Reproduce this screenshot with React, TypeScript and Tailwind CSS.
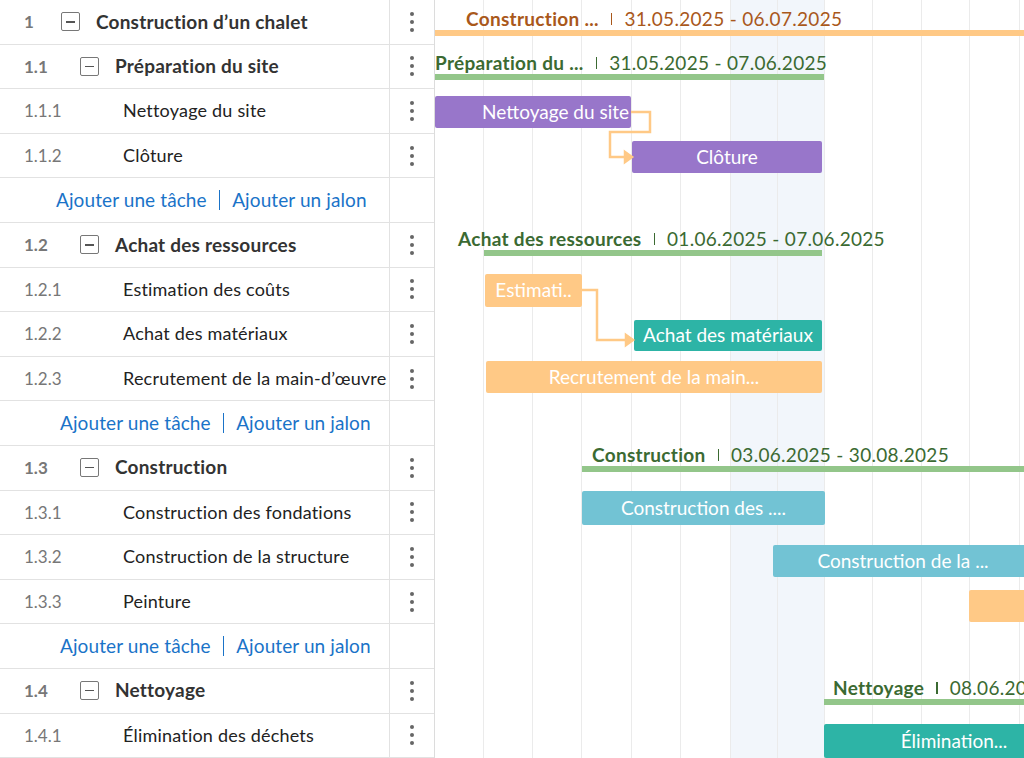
const F = { fontFamily: '"Lato","Noto Sans",sans-serif' };

type Row =
  | { kind: "task"; num: string; name: string; level: 0 | 1 | 2 }
  | { kind: "add"; pad: string };

const rows: Row[] = [
  { kind: "task", num: "1", name: "Construction d’un chalet", level: 0 },
  { kind: "task", num: "1.1", name: "Préparation du site", level: 1 },
  { kind: "task", num: "1.1.1", name: "Nettoyage du site", level: 2 },
  { kind: "task", num: "1.1.2", name: "Clôture", level: 2 },
  { kind: "add", pad: "pl-[56px]" },
  { kind: "task", num: "1.2", name: "Achat des ressources", level: 1 },
  { kind: "task", num: "1.2.1", name: "Estimation des coûts", level: 2 },
  { kind: "task", num: "1.2.2", name: "Achat des matériaux", level: 2 },
  { kind: "task", num: "1.2.3", name: "Recrutement de la main-d’œuvre", level: 2 },
  { kind: "add", pad: "pl-[60px]" },
  { kind: "task", num: "1.3", name: "Construction", level: 1 },
  { kind: "task", num: "1.3.1", name: "Construction des fondations", level: 2 },
  { kind: "task", num: "1.3.2", name: "Construction de la structure", level: 2 },
  { kind: "task", num: "1.3.3", name: "Peinture", level: 2 },
  { kind: "add", pad: "pl-[60px]" },
  { kind: "task", num: "1.4", name: "Nettoyage", level: 1 },
  { kind: "task", num: "1.4.1", name: "Élimination des déchets", level: 2 },
];

function Minus() {
  return (
    <span className="w-[19px] h-[19px] border border-[#777] rounded-[2px] flex items-center justify-center mr-[16px]">
      <span className="w-[9px] h-[1.5px] bg-[#555]" />
    </span>
  );
}

function Dots() {
  return (
    <div className="w-[45px] h-full border-l border-[#e2e2e2] flex flex-col items-center justify-center gap-[4px]">
      <span className="w-[4px] h-[4px] rounded-full bg-[#666]" />
      <span className="w-[4px] h-[4px] rounded-full bg-[#666]" />
      <span className="w-[4px] h-[4px] rounded-full bg-[#666]" />
    </div>
  );
}

function LeftRow({ r }: { r: Row }) {
  if (r.kind === "add") {
    return (
      <div className="h-[44.6px] flex border-b border-[#e2e2e2]">
        <div className={`flex-1 flex items-center text-[19px] tracking-[0.1px] text-[#1a73c8] ${r.pad}`}>
          Ajouter une tâche
          <span className="mx-[12px] w-[1.5px] h-[20px] bg-[#1a73c8]" />
          Ajouter un jalon
        </div>
        <div className="w-[45px] border-l border-[#e2e2e2]" />
      </div>
    );
  }
  const nameStyle =
    r.level === 2 ? "text-[#222] font-normal text-[18px]" : "text-[#333] font-bold text-[19px]";
  return (
    <div className="h-[44.6px] flex border-b border-[#e2e2e2]">
      <div className="flex-1 flex items-center">
        <span
          className={`text-[17px] text-[#777] ${r.level === 2 ? "" : "font-bold"} ${
            r.level === 0 ? "w-[61px] pl-[24px]" : r.level === 1 ? "w-[80px] pl-[24px]" : "w-[123px] pl-[24px]"
          }`}
        >
          {r.num}
        </span>
        {r.level !== 2 && <Minus />}
        <span className={`tracking-[0.2px] ${nameStyle}`}>{r.name}</span>
      </div>
      <Dots />
    </div>
  );
}

function Bar({ x, y, w, h, color, label, align = "center" }: { x: number; y: number; w: number; h: number; color: string; label: string; align?: string }) {
  return (
    <div
      className={`absolute rounded-[2px] flex items-center text-[19px] text-white whitespace-nowrap overflow-hidden px-[2px] ${
        align === "right" ? "justify-end" : "justify-center"
      }`}
      style={{ left: x, top: y, width: w, height: h, background: color }}
    >
      {label}
    </div>
  );
}

function Summary({ x, y, tx, w, label, dates, tone, bar }: { x: number; y: number; tx: number; w: number; label: string; dates: string; tone: string; bar: string }) {
  return (
    <>
      <div className="absolute flex items-center whitespace-nowrap text-[19px] tracking-[0.3px]" style={{ left: tx, top: y, color: tone }}>
        <span className="font-bold">{label}</span>
        <span className="mx-[12px] w-[1.5px] h-[12px]" style={{ background: tone }} />
        <span>{dates}</span>
      </div>
      <div className="absolute h-[6px]" style={{ left: x, top: y + 25, width: w, background: bar }} />
    </>
  );
}

export default function App() {
  const lines = [484, 533, 582, 632, 681, 731, 778, 825, 873, 922, 970, 1020];
  return (
    <div className="w-[1024px] h-[758px] flex overflow-hidden bg-white" style={F}>
      <div className="w-[435px] shrink-0 border-r border-[#dcdcdc]">
        {rows.map((r, i) => (
          <LeftRow key={i} r={r} />
        ))}
      </div>
      <div className="relative flex-1 overflow-hidden">
        <div className="absolute bg-[#f2f6fb]" style={{ left: 731 - 436, top: 0, width: 94, height: 758 }} />
        {lines.map((l) => (
          <div key={l} className="absolute w-px bg-[#ebebeb]" style={{ left: l - 436, top: 0, height: 758 }} />
        ))}
        <Summary x={0} y={5} tx={31} w={600} label="Construction ..." dates="31.05.2025 - 06.07.2025" tone="#a9581b" bar="#ffc986" />
        <Summary x={0} y={49} tx={0} w={389} label="Préparation du ..." dates="31.05.2025 - 07.06.2025" tone="#3b6a32" bar="#93c68a" />
        <Bar x={0} y={96} w={196} h={32} color="#9876ca" label="Nettoyage du site" align="right" />
        <Bar x={197} y={141} w={190} h={32} color="#9876ca" label="Clôture" />
        <Summary x={49} y={225} tx={23} w={338} label="Achat des ressources" dates="01.06.2025 - 07.06.2025" tone="#3b6a32" bar="#93c68a" />
        <Bar x={50} y={274} w={97} h={33} color="#ffc986" label="Estimati.." />
        <Bar x={199} y={320} w={188} h={31} color="#2db4a6" label="Achat des matériaux" />
        <Bar x={51} y={361} w={336} h={32} color="#ffc986" label="Recrutement de la main..." />
        <Summary x={147} y={441} tx={157} w={460} label="Construction" dates="03.06.2025 - 30.08.2025" tone="#3b6a32" bar="#93c68a" />
        <Bar x={147} y={491} w={243} h={34} color="#72c3d4" label="Construction des ...." />
        <Bar x={338} y={545} w={260} h={32} color="#72c3d4" label="Construction de la ..." />
        <Bar x={534} y={590} w={60} h={32} color="#ffc986" label="" />
        <Summary x={389} y={674} tx={398} w={260} label="Nettoyage" dates="08.06.2025 - 14.06.2025" tone="#3b6a32" bar="#93c68a" />
        <Bar x={389} y={724} w={260} h={34} color="#2db4a6" label="Élimination..." />
        <svg className="absolute left-0 top-0" width="588" height="758" fill="none" stroke="#ffc986" strokeWidth="2.5">
          <path d="M196 112 H215 V132 H175 V157 H192" />
          <path d="M190 152 L197 157 L190 162 Z" fill="#ffc986" />
          <path d="M147 290 H162 V340 H192" />
          <path d="M191 335 L198 340 L191 345 Z" fill="#ffc986" />
        </svg>
      </div>
    </div>
  );
}
